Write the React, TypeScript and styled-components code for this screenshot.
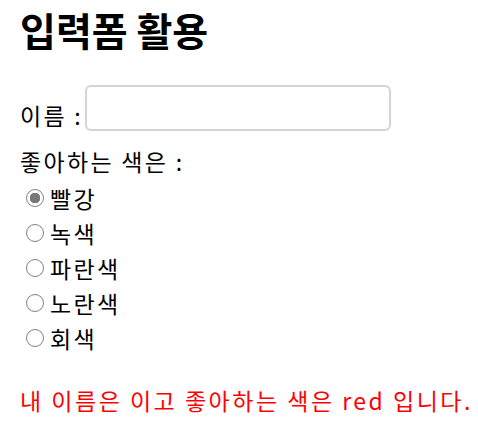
import React, { useState } from 'react';
import styled, { createGlobalStyle } from 'styled-components';

const GlobalStyle = createGlobalStyle`
    body {
        margin: 0;
        background: #ffffff;
        font-family: "Noto Sans CJK KR", "Noto Sans", sans-serif;
        color: #000000;
    }
`

const COLORS = [
    { value: 'red', label: '빨강' },
    { value: 'green', label: '녹색' },
    { value: 'blue', label: '파란색' },
    { value: 'yellow', label: '노란색' },
    { value: 'gray', label: '회색' },
]

export default function App() {
    const [name, setName] = useState('')
    const [color, setColor] = useState('red')

    return (<PageWrapper>
        <GlobalStyle />
        <TitleStyled>입력폼 활용</TitleStyled>

        <NameRowStyled>
            <LabelText>이름 :</LabelText>
            <NameInput value={name} onChange={e => setName(e.target.value)} />
        </NameRowStyled>

        <ColorLabel>좋아하는 색은 :</ColorLabel>
        <RadioListStyled>
            {COLORS.map(c => (
                <RadioRowStyled key={c.value}>
                    <RadioInput
                        type="radio"
                        name="color"
                        value={c.value}
                        checked={color === c.value}
                        onChange={() => setColor(c.value)}
                    />
                    {c.label}
                </RadioRowStyled>
            ))}
        </RadioListStyled>

        <ResultStyled>내 이름은 {name}이고 좋아하는 색은 {color} 입니다.</ResultStyled>
    </PageWrapper>
    )
}

const PageWrapper = styled.div`
    display: flex;
    flex-direction: column;
    padding: 4px 0 4px 20px;
    font-size: 23px;
    letter-spacing: 2.3px;
`

const TitleStyled = styled.h1`
    font-size: 39px;
    font-weight: 700;
    letter-spacing: 0;
    margin: 0 0 30px;
    line-height: 1.3;
`

const NameRowStyled = styled.div`
    display: flex;
    align-items: flex-end;
    gap: 2px;
`

const LabelText = styled.div`
    line-height: 1.4;
`

const ColorLabel = styled(LabelText)`
    margin-top: 14px;
`

const NameInput = styled.input`
    width: 306px;
    height: 46px;
    box-sizing: border-box;
    border: 2px solid #d1d4da;
    border-radius: 6px;
    font-size: 20px;
    padding: 0 8px;
    outline: none;
`

const RadioListStyled = styled.div`
    display: flex;
    flex-direction: column;
    padding: 4px 0 0 6px;
`

const RadioRowStyled = styled.label`
    display: flex;
    align-items: center;
    height: 35px;
`

const RadioInput = styled.input`
    appearance: none;
    box-sizing: border-box;
    width: 18px;
    height: 18px;
    flex: none;
    margin: 0 6px 0 0;
    border: 1.5px solid #808080;
    border-radius: 50%;
    background: #ffffff;

    &:checked {
        background: radial-gradient(circle, #777777 0 5px, #ffffff 5.5px);
    }
`

const ResultStyled = styled.p`
    color: #ff0000;
    white-space: nowrap;
    letter-spacing: 2.5px;
    margin: 27px 0 0;
`
